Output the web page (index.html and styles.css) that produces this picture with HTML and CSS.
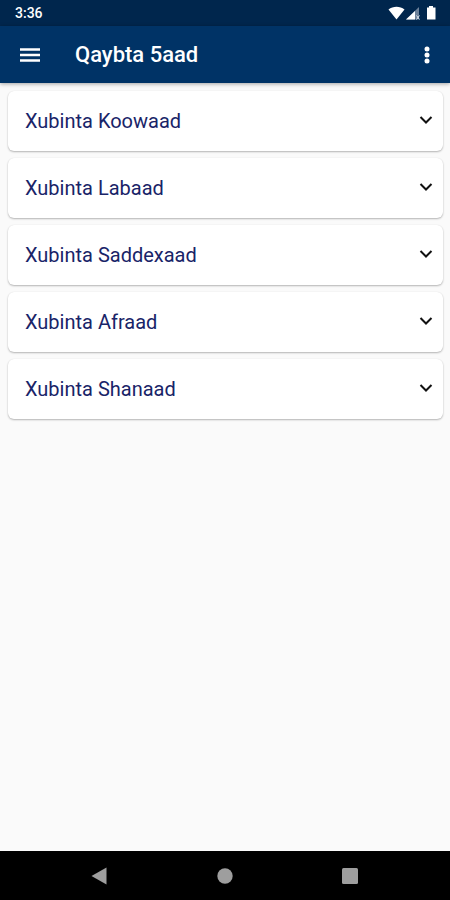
FILE: index.html
```html
<!DOCTYPE html>
<html lang="so">
<head>
<meta charset="utf-8">
<meta name="viewport" content="width=device-width, initial-scale=1">
<title>Qaybta 5aad</title>
<link rel="stylesheet" href="styles.css">
</head>
<body>
<div class="status">
  <span class="time">3:36</span>
  <svg class="status-icons" width="50" height="16" viewBox="0 0 50 16" aria-hidden="true">
    <path d="M0.500 4.500C5 .8 12 .8 16.500 4.500L8.500 14.500Z" fill="#fff"/>
    <path d="M31 2V14.500H18Z" fill="#6d8199"/>
    <path d="M27 6V14.500H18Z" fill="#fff"/>
    <path d="M28.500 10.500l3 4M31.500 10.500l-3 4" stroke="#dfe6ee" stroke-width="1"/>
    <path d="M41 1h4v1.500h2.500v12h-8.500v-12H41z" fill="#fff"/>
  </svg>
</div>
<header class="toolbar">
  <button class="icon-button" type="button" aria-label="Menu">
    <svg width="22" height="16" viewBox="0 0 22 16"><path d="M1 2.500h20M1 8h20M1 13.500h20" stroke="#fff" stroke-width="2.500"/></svg>
  </button>
  <h1 class="title">Qaybta 5aad</h1>
  <button class="icon-button" type="button" aria-label="More options">
    <svg width="6" height="20" viewBox="0 0 6 20" fill="#fff"><circle cx="3" cy="4" r="2.500"/><circle cx="3" cy="10" r="2.500"/><circle cx="3" cy="16" r="2.500"/></svg>
  </button>
</header>
<main class="list">
  <button class="card" type="button" aria-expanded="false"><span>Xubinta Koowaad</span><svg class="chevron" viewBox="0 0 14 10"><path d="M1.500 1L7 6.500 12.500 1"/></svg></button>
  <button class="card" type="button" aria-expanded="false"><span>Xubinta Labaad</span><svg class="chevron" viewBox="0 0 14 10"><path d="M1.500 1L7 6.500 12.500 1"/></svg></button>
  <button class="card" type="button" aria-expanded="false"><span>Xubinta Saddexaad</span><svg class="chevron" viewBox="0 0 14 10"><path d="M1.500 1L7 6.500 12.500 1"/></svg></button>
  <button class="card" type="button" aria-expanded="false"><span>Xubinta Afraad</span><svg class="chevron" viewBox="0 0 14 10"><path d="M1.500 1L7 6.500 12.500 1"/></svg></button>
  <button class="card" type="button" aria-expanded="false"><span>Xubinta Shanaad</span><svg class="chevron" viewBox="0 0 14 10"><path d="M1.500 1L7 6.500 12.500 1"/></svg></button>
</main>
<nav class="navbar">
  <button class="nav-button" type="button" aria-label="Back"><svg width="18" height="18" viewBox="0 0 18 18"><path d="M.5 9L15.500 .5v17z"/></svg></button>
  <button class="nav-button" type="button" aria-label="Home"><svg width="18" height="18" viewBox="0 0 18 18"><circle cx="9" cy="9" r="7.700"/></svg></button>
  <button class="nav-button" type="button" aria-label="Recent apps"><svg width="18" height="18" viewBox="0 0 18 18"><rect x="1" y="1" width="16" height="16" rx="1.500"/></svg></button>
</nav>
</body>
</html>
```
FILE: styles.css
```css
* {
  box-sizing: border-box;
}

body {
  margin: 0;
  min-height: 100vh;
  display: flex;
  flex-direction: column;
  background: #fafafa;
  font-family: Roboto, "Liberation Sans", sans-serif;
}

button {
  border: 0;
  padding: 0;
  font: inherit;
  background: none;
}

svg {
  display: block;
}

.status {
  display: flex;
  align-items: center;
  justify-content: space-between;
  height: 26px;
  padding: 0 12px 0 15px;
  background: #00264d;
  color: #fff;
}

.time {
  font-size: 14px;
  font-weight: 500;
  line-height: 16px;
}

.toolbar {
  display: flex;
  align-items: center;
  height: 57px;
  padding: 0 8px 0 15px;
  background: #003366;
  color: #fff;
  box-shadow: 0 1px 4px rgba(0, 0, 0, 0.35);
}

.icon-button {
  display: flex;
  align-items: center;
  justify-content: center;
  width: 30px;
  height: 40px;
}

.title {
  flex: 1;
  margin: 0;
  padding-left: 30px;
  font-size: 22px;
  font-weight: 500;
  line-height: 28px;
}

.list {
  flex: 1;
  display: flex;
  flex-direction: column;
  gap: 7px;
  padding: 8px 7px 8px 8px;
}

.card {
  display: flex;
  align-items: center;
  justify-content: space-between;
  height: 60px;
  padding: 0 10px 0 17px;
  border-radius: 6px;
  background: #fff;
  box-shadow: 0 1px 2px rgba(0, 0, 0, 0.28), 0 0 1px rgba(0, 0, 0, 0.08);
  color: #192468;
  font-size: 20px;
  line-height: 26px;
  text-align: left;
}

.chevron {
  width: 14px;
  height: 10px;
  fill: none;
  stroke: #111;
  stroke-width: 2;
}

.navbar {
  display: flex;
  align-items: center;
  justify-content: center;
  gap: 77px;
  height: 49px;
  background: #000;
}

.nav-button {
  display: flex;
  align-items: center;
  justify-content: center;
  width: 48px;
  height: 48px;
  fill: #9e9e9e;
}
```
